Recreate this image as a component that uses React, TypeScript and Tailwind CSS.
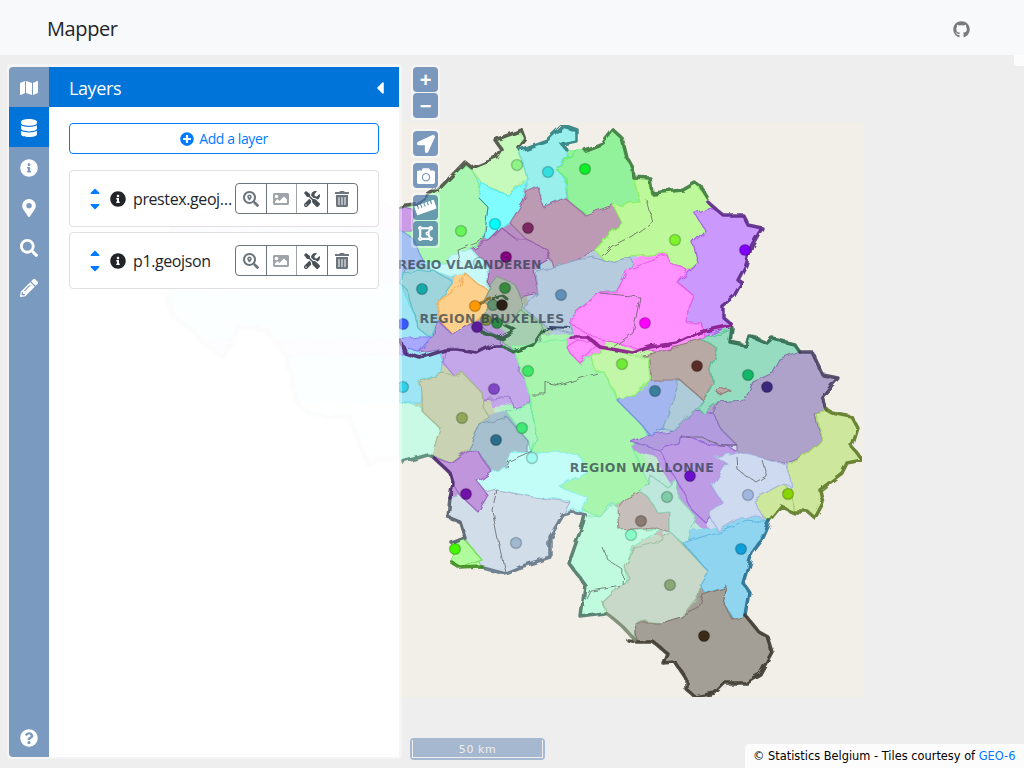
import React from 'react';
import {
  FaMap, FaDatabase, FaInfoCircle, FaMapMarkerAlt, FaSearch, FaPencilAlt, FaQuestionCircle,
  FaCaretLeft, FaPlusCircle, FaSortUp, FaSortDown, FaSearchLocation, FaImage, FaTools,
  FaTrashAlt, FaGithub, FaLocationArrow, FaCamera, FaRulerHorizontal, FaDrawPolygon,
} from 'react-icons/fa';

// fill, edge colour, points (page coordinates)
const regions: [string, string, string][] = [
  ['#c8fae5', '#8fe8c8', '150,300 402,403 420,407 435,420 440,430 433,453 428,455 403,462 300,420'],
  ['#9ee6f5', '#6fd8e8', '150,280 400,283 420,327 433,335 443,362 442,373 423,380 420,403 402,403 150,400'],
  ['#aaf7b4', '#80e890', '472,170 480,185 478,197 488,207 484,240 470,250 470,258 445,262 425,262 412,250 412,240 400,232 400,207 415,205 438,190 465,165'],
  ['#cb9be8', '#a070c8', '150,180 400,207 413,210 413,232 400,232 150,240'],
  ['#a4c0f0', '#80a0d8', '150,230 400,230 412,238 425,263 405,270 400,283 150,290'],
  ['#c6fabc', '#a0e890', '467,163 497,158 502,150 495,140 520,132 520,153 527,178 507,195 500,192 482,183 472,170'],
  ['#98efeb', '#70e0e0', '520,150 547,140 563,127 575,128 577,140 567,148 567,157 557,167 565,180 565,197 543,207 538,187 527,192 527,178'],
  ['#92f29c', '#60f070', '557,170 567,157 577,149 592,145 603,143 613,128 622,138 627,157 632,167 640,202 613,205 587,215 567,200 565,177'],
  ['#7ffcfd', '#60e8f0', '482,183 500,193 507,195 526,183 523,202 510,223 502,228 490,240 483,237 488,207 478,197'],
  ['#bd9ab4', '#a070a0', '527,192 538,187 543,207 565,198 585,215 613,205 622,223 610,233 595,250 577,260 553,267 548,250 527,240 510,223 523,202'],
  ['#b98ec4', '#9860a8', '502,228 517,240 527,240 548,250 550,260 533,270 538,293 520,297 513,283 490,287 487,267 472,250 490,240'],
  ['#bdf89a', '#90f060', '640,202 633,177 648,178 650,193 687,187 695,183 708,200 710,207 695,213 705,230 693,243 698,263 688,270 670,263 667,253 630,257 607,263 595,250 610,233 622,223 613,205'],
  ['#cb98fe', '#a860f0', '695,213 710,207 723,215 743,215 748,223 762,228 750,245 747,263 738,280 743,283 735,298 723,307 723,315 732,325 705,337 702,323 687,323 688,307 693,295 678,283 693,268 698,263 693,243 705,230'],
  ['#b6cbde', '#90a8c8', '535,273 553,267 577,260 595,257 607,263 630,257 633,263 617,290 600,292 570,317 573,333 547,327 522,307 538,293'],
  ['#ff92ff', '#e860e8', '570,317 582,308 600,292 617,292 627,270 667,255 670,263 687,270 678,283 693,295 688,307 687,323 702,323 705,337 690,347 673,347 660,352 633,347 593,337 570,323'],
  ['#c8f9f9', '#a0ecec', '425,263 445,262 460,252 472,250 487,267 488,290 477,283 465,273 452,277 433,270'],
  ['#9ed5dc', '#60c0c8', '402,273 433,270 453,282 440,300 437,320 430,337 420,330 407,290 400,283'],
  ['#fdd08c', '#f0b060', '465,273 477,283 488,290 483,300 490,307 472,323 453,335 437,317 440,300 460,287'],
  ['#aab6a8', '#80a088', '488,290 498,277 513,283 520,297 522,313 510,323 490,323 483,313 490,307 483,300'],
  ['#a6ceb0', '#78b088', '520,310 540,323 543,330 540,343 513,350 500,340 515,332 500,323 510,323'],
  ['#b79ad8', '#9070c0', '437,320 453,335 472,323 480,327 500,337 498,350 470,353 457,347 420,353 433,337'],
  ['#a8a8ff', '#8080f0', '150,340 400,340 417,337 433,337 420,353 407,347 405,355 150,355'],
  ['#c3a7ea', '#a080d0', '443,362 445,352 458,350 477,353 493,345 510,348 520,360 518,370 530,387 530,402 513,407 510,397 483,400 482,393 462,373 453,375'],
  ['#c9d2b2', '#a8b890', '420,383 443,373 453,375 462,372 482,393 483,407 490,418 480,425 468,448 450,463 432,455 440,428 423,412'],
  ['#a8f5ae', '#80f0a0', '530,395 520,368 513,347 543,342 567,340 567,347 570,353 580,363 592,357 595,372 605,373 617,400 640,423 648,437 632,447 648,483 640,492 623,503 612,503 600,517 583,510 560,487 587,473 580,457 563,453 533,452 537,437'],
  ['#a9f5bf', '#70e8a0', '507,412 530,403 537,437 532,452 527,440'],
  ['#a7c0cf', '#80a0b8', '480,425 507,417 527,440 527,452 510,460 508,468 493,473 480,453 467,453 468,448'],
  ['#c3fdf7', '#90f0e8', '477,482 490,472 508,468 510,452 533,453 563,452 580,457 587,473 560,487 588,497 582,512 573,508 563,513 570,500 533,497 497,490 487,493'],
  ['#d2ddea', '#a8b8d0', '450,498 460,495 478,483 487,493 497,490 533,497 570,502 563,515 550,537 550,557 520,567 505,573 482,567 465,538 460,522 448,517'],
  ['#c095dc', '#9868c0', '433,457 450,463 468,450 480,453 485,463 492,472 478,482 488,495 478,512 460,495 453,483 450,473'],
  ['#b0fb9c', '#70e050', '452,543 465,540 482,560 460,568 452,563'],
  ['#c0fbe0', '#90e8c0', '585,515 600,517 612,503 620,510 620,530 663,528 633,547 627,563 625,588 607,600 603,602 605,612 581,617 585,585 569,563 570,567 573,540'],
  ['#c9d9c9', '#a0c0a0', '671,532 683,545 707,570 699,595 681,617 661,623 639,620 635,637 631,638 623,627 605,612 603,602 629,578 625,567 635,548 655,543'],
  ['#c5bebb', '#a09088', '618,510 627,498 640,492 648,497 658,513 670,512 670,532 653,527 620,530'],
  ['#bde8db', '#90d0b8', '650,475 667,487 677,478 678,497 697,518 687,547 670,532 670,512 658,513 648,497 640,492 648,483'],
  ['#b39be0', '#9070d0', '632,443 650,435 673,430 695,410 713,413 722,430 737,445 727,445 710,445 682,435 680,445 660,450'],
  ['#bd9be5', '#9868d8', '660,450 680,445 682,435 710,445 727,445 737,452 717,457 727,463 712,487 723,503 705,522 692,510 677,480 670,470'],
  ['#a3b6f0', '#7890e0', '617,400 643,380 677,378 678,390 667,417 663,428 650,435 640,423'],
  ['#aecbd9', '#88b0c0', '677,382 693,378 703,400 698,407 673,430 663,428 667,417 678,390'],
  ['#b9a9a5', '#907c78', '642,355 660,352 702,340 717,348 710,370 713,383 703,400 680,380 650,380 650,360'],
  ['#c2f6a9', '#90f070', '592,357 607,347 633,357 648,357 650,380 633,397 617,398 605,373 595,370'],
  ['#96dcc0', '#60c098', '702,340 732,328 730,342 745,345 748,333 767,343 770,337 793,343 800,353 780,360 773,373 753,382 745,400 718,402 703,413 698,408 707,395 713,383 710,370 717,348'],
  ['#afa2ca', '#8878b0', '800,352 812,352 823,375 838,378 820,397 827,410 813,413 822,440 803,457 787,463 763,458 737,452 737,445 722,430 713,413 718,402 745,400 753,382 773,373 780,360'],
  ['#cde89c', '#a8d070', '815,413 827,410 832,413 852,417 858,428 852,447 862,460 862,465 847,463 842,473 820,490 823,503 815,518 793,512 792,493 788,465 803,457 822,440'],
  ['#cde89c', '#a8d070', '753,500 783,483 792,493 793,512 782,507 770,522 760,513'],
  ['#cddaf0', '#a8b8e0', '715,457 737,452 763,458 787,465 792,487 783,483 753,500 762,515 768,525 760,517 737,518 717,530 708,512 723,503 712,487 727,463'],
  ['#90d5f0', '#60b8e0', '683,543 717,532 747,520 768,523 752,553 743,583 749,592 745,617 735,620 723,603 727,587 705,593 699,583 707,570'],
  ['#ff92ff', '#e860e8', '567,347 577,340 598,343 590,353 580,363 570,353'],
  ['#a39e96', '#807a70', '635,623 661,623 681,617 699,608 703,595 727,587 723,603 733,620 747,615 759,632 768,637 773,653 761,675 747,683 725,683 715,693 695,697 687,690 687,680 675,662 663,663 667,653 653,642 637,642'],
  ['#b9a9a5', '#907c78', '716,391 726,388 730,390 720,395'],
];

// thin district lines
const innerLines = [
  '603,257 613,247 633,237 653,223 647,200',
  '600,293 640,297 633,333 613,347',
  '532,395 547,395 547,383 560,385 597,373',
  '497,490 492,510 498,540 505,572',
  '603,548 608,560 623,570 622,585 590,590 585,600',
  '680,437 700,437 720,445 737,445',
  '737,457 738,470 757,483 767,477 762,460',
  '478,197 488,207 484,240 458,250 460,262',
  '533,452 510,462 508,468',
];

// thick outer borders, north then clockwise, by colour
const outerBorders: [string, string][] = [
  ['#4a4f42', '400,207 415,205 438,190 465,162 472,168 497,158 502,150 495,140 522,130 525,138 518,147'],
  ['#2f8080', '520,150 547,140 563,125 577,130 577,142 563,145 567,150'],
  ['#3d7a3d', '585,150 603,143 613,130 622,138 627,158 632,167 633,177 650,178 652,193 683,190 695,183 700,185 708,198'],
  ['#5b2a86', '708,202 723,215 743,215 748,225 762,228 752,245 746,265 738,280 743,283 735,297 723,307 723,317 732,325'],
  ['#2f6a50', '732,328 730,342 745,345 748,335 767,343 772,338 793,343 800,352'],
  ['#4a4060', '800,352 812,352 823,375 838,378 822,397 827,410'],
  ['#5f7a28', '827,410 832,413 852,417 858,428 852,447 862,460 847,463 842,473 820,490 823,503 815,518 808,512 793,512 782,507 770,522'],
  ['#2a7090', '770,522 762,540 752,553 743,583 749,592 745,615'],
  ['#3e3a30', '745,615 759,632 768,637 773,653 761,675 747,683 725,683 715,693 695,697 687,690 687,680 675,662 663,663 667,653 653,642 637,642 628,640'],
  ['#7a8a70', '635,640 623,627 605,612'],
  ['#507868', '605,614 581,617 585,585 569,563 583,523 585,515'],
  ['#667888', '585,515 573,512 563,515 550,537 550,557 520,567 505,573 482,567'],
  ['#3f8a20', '482,567 460,568 452,563'],
  ['#55606a', '452,543 465,538 460,522 448,517 450,498'],
  ['#4a2a6a', '450,498 453,483 450,473 433,457'],
  ['#5a8a78', '433,457 428,455 403,462'],
];

// the part that lies under the sidebar
const westEdge = '397,457 367,463 350,417 310,415 297,403 287,357 267,330 237,327 225,357 203,343 193,330 173,317 168,297 170,240 200,170';
const outline = outerBorders.map(([, pts]) => pts).join(' ') + ' ' + westEdge;

const innerBorders: [string, string, number][] = [
  ['#4c2a6c', '400,340 405,353 420,358 445,350 458,350 477,353 493,345 500,345', 3.5],
  ['#2c5c3c', '482,332 500,338 515,330 505,325', 3.5],
  ['#2c6a3c', '500,345 513,352 533,345 543,330', 3],
  ['#2a3a5a', '543,330 550,327 570,328', 2],
  ['#8a1a8a', '570,337 587,337 600,347 617,350 633,353 650,347 677,343 700,332 732,325', 3.5],
  ['#3a5a3a', '493,300 494,297 502,295 508,300', 3],
  ['#8a6a2a', '478,303 490,298', 3],
];

const dots: [number, number, string][] = [
  [517, 165, '#8cf586'], [548, 172, '#33dede'], [585, 169, '#10ee2a'], [461, 231, '#66f558'],
  [495, 224, '#00ffff'], [528, 228, '#7a2860'], [675, 240, '#7ff32c'], [745, 250, '#7f00ff'],
  [506, 257, '#800080'], [479, 263, '#b8f8f4'], [561, 295, '#6090b8'], [422, 289, '#18a8a8'],
  [505, 288, '#388a3e'], [493, 305, '#60906c'], [475, 306, '#ff9900'], [502, 305, '#2a2018'],
  [403, 324, '#3a5aff'], [477, 327, '#5a1a9a'], [486, 320, '#80904a'], [497, 323, '#2c8a44'],
  [645, 323, '#ff00ff'], [528, 371, '#40e868'], [622, 364, '#70ec38'], [697, 366, '#5a2c28'],
  [748, 375, '#10b868'], [767, 387, '#38287e'], [655, 391, '#38809c'], [494, 389, '#8048c8'],
  [462, 418, '#90a858'], [496, 440, '#2a6e8a'], [522, 428, '#40e878'], [532, 458, '#a0fbf0'],
  [690, 476, '#6a10c8'], [667, 497, '#80cca8'], [466, 494, '#7010a8'], [788, 494, '#88d400'],
  [748, 495, '#a0b8e0'], [641, 521, '#8a7a70'], [631, 535, '#88ffc8'], [516, 543, '#a0b8d0'],
  [455, 549, '#44f800'], [741, 549, '#10a0d8'], [670, 585, '#88a878'], [704, 636, '#3a2c18'],
  [403, 387, '#30d0e8'],
];

const labels: [number, number, string, number][] = [
  [469.5, 269, 'REGIO VLAANDEREN', 0.05],
  [492, 323, 'REGION BRUXELLES', 0.35],
  [642, 472, 'REGION WALLONNE', 0.5],
];

const BelgiumMap = () => (
  <svg className="absolute inset-0 w-full h-full" viewBox="0 55 1024 713">
    <defs>
      <filter id="rough" x="0" y="0" width="100%" height="100%">
        <feTurbulence type="fractalNoise" baseFrequency="0.08" numOctaves="2" seed="4" result="noise" />
        <feDisplacementMap in="SourceGraphic" in2="noise" scale="7" result="moved" />
        <feGaussianBlur in="moved" stdDeviation="0.45" />
      </filter>
      <clipPath id="belgium">
        <polygon points={outline} />
      </clipPath>
    </defs>
    <rect x="150" y="122" width="714" height="575" fill="#f2efe9" />
    <g filter="url(#rough)">
      {/* fat first pass closes the gaps between neighbours */}
      <g clipPath="url(#belgium)">
        <polygon points={outline} fill="#c0e8d0" />
        {regions.map(([fill, , pts], i) => (
          <polygon key={i} points={pts} fill={fill} stroke={fill} strokeWidth="14" strokeLinejoin="round" />
        ))}
      </g>
      {regions.map(([fill, edge, pts], i) => (
        <polygon key={i} points={pts} fill={fill} stroke={edge} strokeWidth="1.2" strokeLinejoin="round" clipPath="url(#belgium)" />
      ))}
      {innerLines.map((pts, i) => (
        <polyline key={i} points={pts} fill="none" stroke="#555" strokeWidth="0.7" />
      ))}
      <polyline points={westEdge} fill="none" stroke="#888" strokeWidth="5" />
      {outerBorders.map(([color, pts], i) => (
        <polyline key={i} points={pts} fill="none" stroke={color} strokeWidth="3.5" strokeOpacity="0.9" strokeLinejoin="round" strokeLinecap="round" />
      ))}
      {innerBorders.map(([color, pts, width], i) => (
        <polyline key={i} points={pts} fill="none" stroke={color} strokeWidth={width} strokeOpacity="0.9" strokeLinejoin="round" strokeLinecap="round" />
      ))}
    </g>
    {dots.map(([cx, cy, color], i) => (
      <circle key={i} cx={cx} cy={cy} r="5.5" fill={color} stroke="#000" strokeOpacity="0.2" strokeWidth="1.5" />
    ))}
    {labels.map(([x, y, text, spacing]) => (
      <text key={text} x={x} y={y} textAnchor="middle" fontFamily="'DejaVu Sans', sans-serif" fontWeight="700" fontSize="12.5" fill="#2f3a4a" fillOpacity="0.72" letterSpacing={spacing}>
        {text}
      </text>
    ))}
  </svg>
);

const Tab = ({ icon, active }: { icon: React.ReactNode; active?: boolean }) => (
  <div className={`h-10 pt-[2px] flex items-center justify-center text-white text-[18px] ${active ? 'bg-[#0074d9]' : ''}`}>{icon}</div>
);

const LayerCard = ({ name }: { name: string }) => (
  <div className="h-[57px] border border-[#dfdfdf] rounded flex items-center pl-[19px] bg-white">
    <div className="flex flex-col items-center w-[12px] pt-[1px] text-[#007bff] text-[16px] leading-none">
      <FaSortUp />
      <FaSortDown className="-mt-[8px]" />
    </div>
    <FaInfoCircle className="ml-[9px] text-[#212529] text-[16px] shrink-0" />
    <span className="ml-[7px] w-[100px] truncate text-[16px] text-[#212529]">{name}</span>
    <div className="ml-[2px] flex h-[31px] w-[123px] border border-[#6c757d] rounded divide-x divide-[#6c757d] text-[#6c757d] text-[16px]">
      <div className="flex-1 flex items-center justify-center"><FaSearchLocation /></div>
      <div className="flex-1 flex items-center justify-center opacity-65"><FaImage /></div>
      <div className="flex-1 flex items-center justify-center text-[#495057]"><FaTools /></div>
      <div className="flex-1 flex items-center justify-center"><FaTrashAlt /></div>
    </div>
  </div>
);

const MapButton = ({ children, className = '' }: { children: React.ReactNode; className?: string }) => (
  <div className={`w-[25px] h-[25px] flex items-center justify-center bg-[#003c88]/50 text-white rounded-sm ${className}`}>{children}</div>
);

const MapControl = ({ children, className = '' }: { children: React.ReactNode; className?: string }) => (
  <div className={`p-[2px] bg-white/40 rounded flex flex-col gap-px ${className}`}>{children}</div>
);

export default function App() {
  return (
    <div className="h-screen flex flex-col bg-[#eeeeee] overflow-hidden tracking-[-0.025em] font-['Open_Sans','Noto_Sans',sans-serif]">
      <header className="h-[55px] shrink-0 bg-[#f8f9fa] flex items-center justify-between pl-[47px] pr-[54px] pt-[3px]">
        <span className="text-[20px] text-[#212529]">Mapper</span>
        <FaGithub className="text-[17px] text-[#7a7a7a]" />
      </header>

      <main className="relative flex-1">
        <BelgiumMap />

        <div className="absolute top-0 right-0 w-[10px] h-[11px] bg-white/80 rounded-bl" />

        {/* sidebar */}
        <aside className="absolute left-[7px] top-[9px] w-[395px] h-[695px] pt-[3px] pl-[2px] pr-[3px] pb-[2px] bg-white/40 rounded flex">
          <nav className="w-10 shrink-0 bg-[#7b9abf] rounded-l-sm flex flex-col">
            <Tab icon={<FaMap />} />
            <Tab icon={<FaDatabase />} active />
            <Tab icon={<FaInfoCircle />} />
            <Tab icon={<FaMapMarkerAlt />} />
            <Tab icon={<FaSearch />} />
            <Tab icon={<FaPencilAlt />} />
            <div className="mt-auto"><Tab icon={<FaQuestionCircle />} /></div>
          </nav>
          <section className="flex-1 bg-white/95">
            <div className="h-10 pt-[2px] bg-[#0074d9] text-white flex items-center justify-between pl-5 pr-[9px]">
              <span className="text-[18px]">Layers</span>
              <FaCaretLeft className="text-[20px]" />
            </div>
            <div className="px-5 pt-4 flex flex-col">
              <button className="h-[31px] border border-[#007bff] rounded text-[#007bff] text-[14px] flex items-center justify-center gap-[5px] bg-white">
                <FaPlusCircle className="text-[14px]" />
                Add a layer
              </button>
              <div className="mt-4 flex flex-col gap-[5px]">
                <LayerCard name="prestex.geojson" />
                <LayerCard name="p1.geojson" />
              </div>
            </div>
          </section>
        </aside>

        {/* map controls */}
        <div className="absolute left-[411px] top-[10px] flex flex-col gap-[6px]">
          <MapControl>
            <MapButton className="text-[20px] font-bold leading-none font-['Liberation_Sans',sans-serif]">+</MapButton>
            <MapButton className="text-[20px] font-bold leading-none font-['Liberation_Sans',sans-serif]">−</MapButton>
          </MapControl>
          <MapControl className="mt-[3px]">
            <MapButton className="text-[18px]"><FaLocationArrow /></MapButton>
          </MapControl>
          <MapControl className="-mt-[3px]">
            <MapButton className="text-[18px]"><FaCamera /></MapButton>
          </MapControl>
          <MapControl className="-mt-[3px]">
            <MapButton className="text-[21px]"><FaRulerHorizontal className="-rotate-[20deg]" /></MapButton>
            <MapButton className="text-[17px]"><FaDrawPolygon /></MapButton>
          </MapControl>
        </div>

        {/* scale line */}
        <div className="absolute left-[410px] top-[683px] w-[135px] h-[22px] p-[2px] bg-[#003c88]/30 rounded">
          <div className="h-full border border-t-0 border-[#eeeeee] text-[#eeeeee] text-[11px] tracking-[0.05em] text-center leading-[20px] font-['DejaVu_Sans',sans-serif]">
            50 km
          </div>
        </div>

        {/* attribution */}
        <div className="absolute right-0 bottom-0 h-6 w-[279px] bg-white/80 rounded-tl pl-2 pt-[2px] flex items-center text-[11.4px] tracking-normal text-black font-['DejaVu_Sans',sans-serif] whitespace-nowrap">
          <span>© Statistics Belgium - Tiles courtesy of <span className="text-[#007bff]">GEO-6</span></span>
        </div>
      </main>
    </div>
  );
}
